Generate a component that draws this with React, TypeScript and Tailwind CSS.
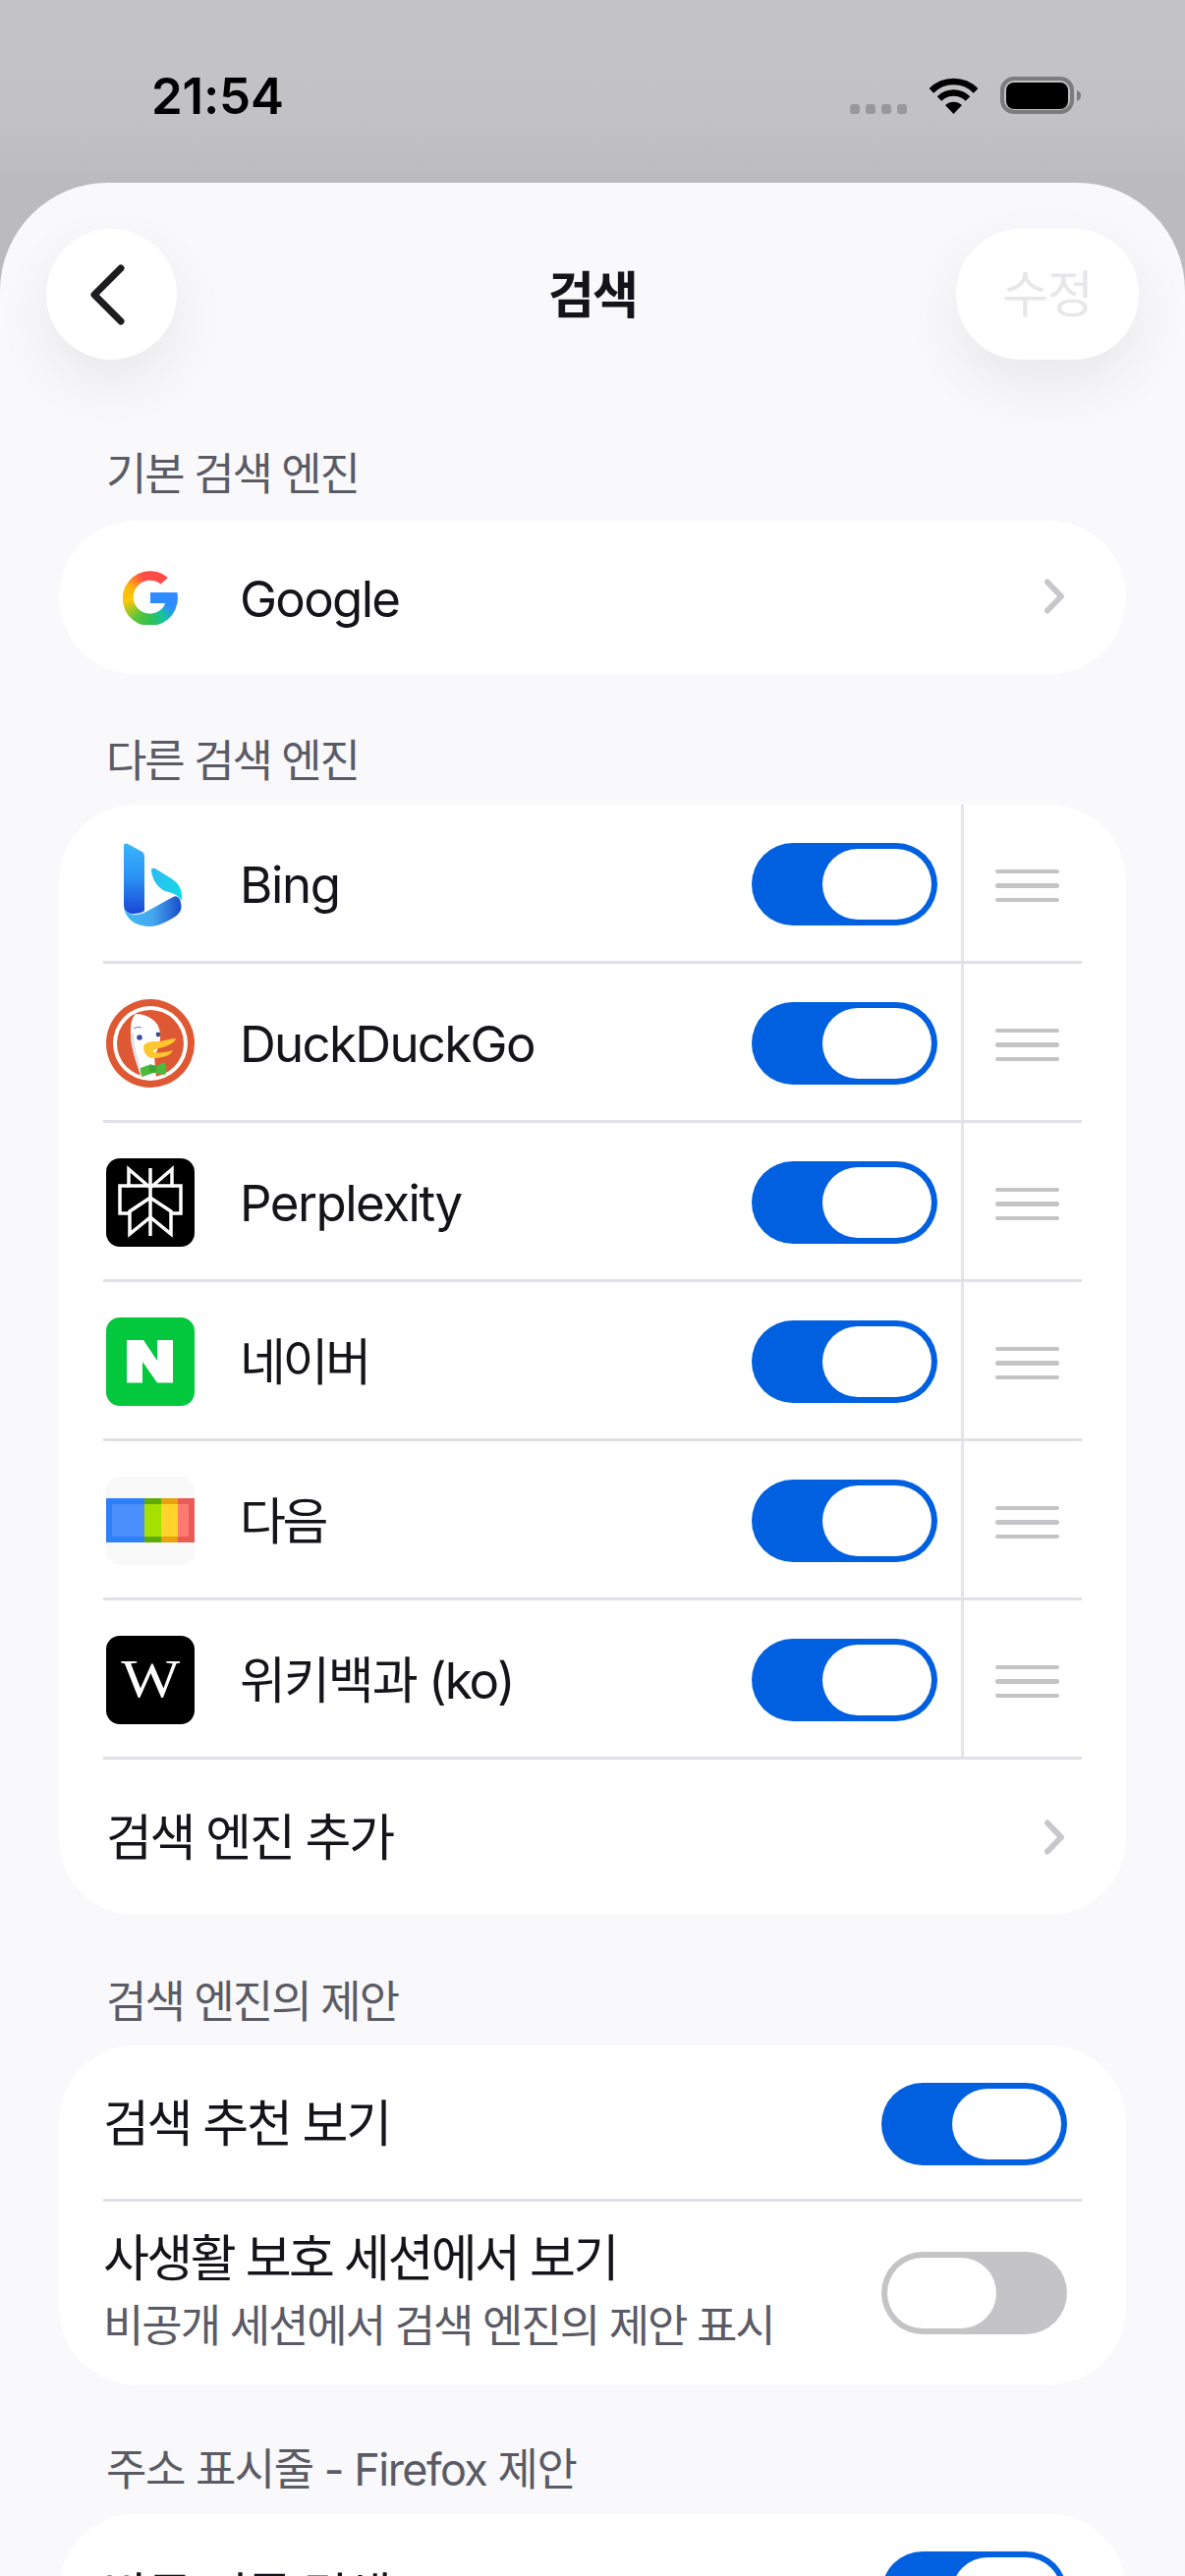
import React from "react";

function Toggle({ on = true }: { on?: boolean }) {
  return on ? (
    <div className="flex h-[84px] w-[189px] shrink-0 items-center justify-end rounded-full bg-[#0060df] pr-[6px]">
      <div className="h-[72px] w-[111px] rounded-full bg-white" />
    </div>
  ) : (
    <div className="flex h-[84px] w-[189px] shrink-0 items-center justify-start rounded-full bg-[#c4c4c6] pl-[6px]">
      <div className="h-[72px] w-[111px] rounded-full bg-white" />
    </div>
  );
}

function Chevron({ className = "" }: { className?: string }) {
  return (
    <svg width="24" height="42" viewBox="0 0 24 42" fill="none" className={`shrink-0 ${className}`}>
      <path d="M5 6.5 L19 21 L5 35.5" stroke="#c8c8cc" strokeWidth="6" strokeLinecap="round" strokeLinejoin="round" />
    </svg>
  );
}

function GoogleIcon() {
  return (
    <div className="flex h-[90px] w-[90px] items-center justify-center">
      <div className="relative h-[56px] w-[56px] overflow-hidden bg-[conic-gradient(from_0deg_at_50%_50%,#ff4b45_0deg,#ff4b45_40deg,#2e8cff_85deg,#2e8cff_115deg,#16c2a0_145deg,#2fc14f_180deg,#5cc63a_215deg,#fcc70a_262deg,#fbb80a_295deg,#ff4b45_340deg,#ff4b45_360deg)] [clip-path:path('M46_8A28_28_0_1_0_55.7_28Q55.7_25_55_23H28V34H43.5A17_17_0_1_1_38.5_14.5Z')]">
        <div className="absolute left-[28px] top-[23px] h-[13px] w-[28px] bg-[#2e8cff]" />
      </div>
    </div>
  );
}

function BingIcon() {
  return (
    <svg width="90" height="90" viewBox="0 0 90 90">
      <defs>
        <linearGradient id="bingStem" x1="0" y1="0" x2="0" y2="1">
          <stop offset="0" stopColor="#37b6fb" />
          <stop offset="0.5" stopColor="#2a90f4" />
          <stop offset="1" stopColor="#1a45d6" />
        </linearGradient>
        <linearGradient id="bingRibbon" x1="0" y1="0" x2="1" y2="0">
          <stop offset="0" stopColor="#3cb9f6" />
          <stop offset="0.5" stopColor="#45a8ee" />
          <stop offset="1" stopColor="#1a4ccb" />
        </linearGradient>
        <linearGradient id="bingLobe" x1="0" y1="0" x2="1" y2="0.4">
          <stop offset="0" stopColor="#30b8f4" />
          <stop offset="1" stopColor="#16d6e6" />
        </linearGradient>
      </defs>
      <path d="M18 68 C20 82 32 88 45 88 C52 88 60 84 67 80 C74 76 78 72 76 64 C75 58 72 56 68 58 L39 74 C30 78 20 76 18 68 Z" fill="url(#bingRibbon)" />
      <path d="M18 6 C18 3 20 3 22 4 L35 11 C38 13 39 14 39 17 L39 72 C34 76 18 78 18 66 Z" fill="url(#bingStem)" />
      <path d="M46 32 C45 29 48 28 50 29 L66 39 C74 44 78 50 77 62 C74 56 68 54 60 52 C52 48 48 42 46 32 Z" fill="url(#bingLobe)" />
    </svg>
  );
}

function DuckIcon() {
  return (
    <svg width="90" height="90" viewBox="0 0 90 90">
      <circle cx="45" cy="45" r="45" fill="#de5833" />
      <circle cx="45" cy="45" r="38" fill="#ffffff" />
      <circle cx="45" cy="45" r="34" fill="#de5833" />
      <path d="M30 15 C25 20 25 28 25 36 C25 50 32 68 36 80 C40 80 46 80 51 79 L49 58 C56 46 58 32 50 23 C45 18 38 15 30 15 Z" fill="#ffffff" />
      <path d="M25 36 C25 50 32 68 36 80 L38 80 C34 66 28 50 28 34 Z" fill="#dfe1e2" />
      <circle cx="34" cy="39" r="2.8" fill="#3a4b9f" />
      <circle cx="53" cy="36" r="2.4" fill="#3a4b9f" />
      <path d="M28 30 Q32 27 36 29" stroke="#6b7bbb" strokeWidth="1" fill="none" />
      <path d="M38 49 C38 43 48 43 55 43 C60 42 66 40 71 40 C70 44 66 46 58 49 C52 50 47 52 48 54 C54 55 62 54 68 52 C66 58 56 60 48 60 C42 60 38 55 38 49 Z" fill="#fdc52f" />
      <path d="M35 70 L46 66 L48 70 L59 64 C62 70 62 74 60 77 L48 75 L37 79 C35 76 35 73 35 70 Z" fill="#4cba3c" />
      <circle cx="47.5" cy="71" r="4" fill="#3fa830" />
    </svg>
  );
}

function PerplexityIcon() {
  return (
    <div className="h-[90px] w-[90px] rounded-[14px] bg-black">
      <svg width="90" height="90" viewBox="0 0 90 90" fill="none" stroke="#fff" strokeWidth="3.5" strokeLinejoin="miter">
        <path d="M45 10 V79" />
        <path d="M23 11 L45 30 L67 11 V28 H23 Z" />
        <path d="M23 28 H14 V56 H24 M67 28 H76 V56 H66" />
        <path d="M45 40 L24 54 V77 L45 60 L66 77 V54 Z" />
      </svg>
    </div>
  );
}

function NaverIcon() {
  return (
    <div className="h-[90px] w-[90px] rounded-[14px] bg-[#03c73c]">
      <svg width="90" height="90" viewBox="0 0 90 90">
        <path d="M21 23 H38 L52 44 V23 H68 V66.5 H52 L37 45 V66.5 H21 Z" fill="#fff" />
      </svg>
    </div>
  );
}

function DaumIcon() {
  return (
    <div className="h-[90px] w-[90px] overflow-hidden rounded-[14px] bg-[#f9f9f9]">
      <svg width="90" height="90" viewBox="0 0 90 90">
        <rect x="0" y="22" width="39" height="45" fill="#2d7ffb" />
        <rect x="39" y="22" width="17" height="45" fill="#5eab07" />
        <rect x="56" y="22" width="17" height="45" fill="#e8a10f" />
        <rect x="73" y="22" width="17" height="45" fill="#e85c55" />
        <rect x="6" y="28" width="33" height="33" fill="#4b8ffd" />
        <rect x="39" y="28" width="17" height="33" fill="#a6e000" />
        <rect x="56" y="28" width="17" height="33" fill="#ffd42a" />
        <rect x="73" y="28" width="11" height="33" fill="#ff7b72" />
      </svg>
    </div>
  );
}

function WikiIcon() {
  return (
    <div className="flex h-[90px] w-[90px] items-center justify-center rounded-[14px] bg-black font-['Liberation_Serif',serif] text-[60px] leading-none text-white">
      <span className="-mt-[2px] scale-x-[1.06] scale-y-[0.92]">W</span>
    </div>
  );
}

function EngineRow({ icon, name, tk }: { icon: React.ReactNode; name: string; tk: string }) {
  return (
    <div className="flex h-[162px] items-stretch border-b-[3px] border-[#e0e0e6]">
      <div className="flex flex-1 items-center pl-[3px] pr-[24px] pt-[3px]">
        <div className="h-[90px] w-[90px] shrink-0">{icon}</div>
        <span className={`ml-[46px] flex-1 text-[51px] leading-none text-[#15141a] ${tk}`}>{name}</span>
        <Toggle />
      </div>
      <div className="flex w-[123px] shrink-0 flex-col items-end justify-center gap-[10px] border-l-[3px] border-[#e5e5e9] pr-[23px] pt-[6px]">
        <div className="h-[4.5px] w-[65px] rounded-full bg-[#c4c4c6]" />
        <div className="h-[4.5px] w-[65px] rounded-full bg-[#c4c4c6]" />
        <div className="h-[4.5px] w-[65px] rounded-full bg-[#c4c4c6]" />
      </div>
    </div>
  );
}

function Heading({ children, tk, last }: { children: React.ReactNode; tk: string; last?: boolean }) {
  return (
    <div className={`mt-[57px] h-[60px] pl-[108px] text-[45px] leading-[60px] text-[#5b5b66] ${tk} ${last ? "mb-[15px]" : "mb-[16px] pt-[2px]"}`}>
      {children}
    </div>
  );
}

export default function App() {
  const engines = [
    { icon: <BingIcon />, name: "Bing", tk: "tracking-[-1.4px]" },
    { icon: <DuckIcon />, name: "DuckDuckGo", tk: "tracking-[-1.7px]" },
    { icon: <PerplexityIcon />, name: "Perplexity", tk: "tracking-[-1.5px]" },
    { icon: <NaverIcon />, name: "네이버", tk: "tracking-[-3.3px]" },
    { icon: <DaumIcon />, name: "다음", tk: "tracking-[-3.3px]" },
    { icon: <WikiIcon />, name: "위키백과 (ko)", tk: "tracking-[-2px]" },
  ];
  return (
    <div className="h-[2622px] w-[1206px] overflow-hidden bg-[linear-gradient(180deg,#c4c4c6_0%,#c2c2c4_120px,#bbbbbd_186px,#bbbbbd_320px)] font-['Inter','Noto_Sans_CJK_KR',sans-serif]">
      {/* status bar */}
      <div className="flex h-[186px] items-start justify-between pl-[154px] pr-[106px] pt-[68px]">
        <span className="text-[51px] font-semibold leading-[60px] tracking-[-0.2px] text-black">21:54</span>
        <div className="flex items-start pt-[10px]">
          <div className="mr-[22px] mt-[28px] flex gap-[6px]">
            <div className="h-[10px] w-[10px] rounded-[3px] bg-[#999999]" />
            <div className="h-[10px] w-[10px] rounded-[3px] bg-[#999999]" />
            <div className="h-[10px] w-[10px] rounded-[3px] bg-[#999999]" />
            <div className="h-[10px] w-[10px] rounded-[3px] bg-[#999999]" />
          </div>
          <svg width="51" height="37" viewBox="0 0 51 37" fill="none" className="mt-[1px]">
            <path d="M2.9 13.4 A32 32 0 0 1 48.1 13.4" stroke="#000" strokeWidth="6.5" />
            <path d="M11 21.5 A20.5 20.5 0 0 1 40 21.5" stroke="#000" strokeWidth="6.5" />
            <path d="M25.5 37 L17 28 A12.5 12.5 0 0 1 34 28 Z" fill="#000" />
          </svg>
          <svg width="82" height="38" viewBox="0 0 82 38" className="ml-[22px]">
            <rect x="2" y="2" width="71" height="34" rx="12" fill="none" stroke="#7c7c7e" strokeWidth="4" />
            <rect x="6" y="6" width="63" height="27" rx="8" fill="#000" />
            <path d="M78 14 C81 15 82 17 82 19 C82 21 81 24 78 25 Z" fill="#7c7c7e" />
          </svg>
        </div>
      </div>

      {/* sheet */}
      <div className="h-[2436px] rounded-t-[110px] bg-[#f9f9fb]">
        <div className="grid grid-cols-[1fr_auto_1fr] items-center px-[47px] pt-[47px]">
          <div className="flex h-[133px] w-[133px] items-center justify-center justify-self-start rounded-full bg-white pr-[10px] shadow-[0_24px_60px_rgba(0,0,0,0.07)]">
            <svg width="40" height="62" viewBox="0 0 40 62" fill="none">
              <path d="M34 4 L7 31 L34 58" stroke="#1d1d20" strokeWidth="7" strokeLinecap="round" strokeLinejoin="round" />
            </svg>
          </div>
          <span className="pt-[2px] text-[51px] font-semibold leading-none tracking-[-2px] text-[#15141a]">검색</span>
          <div className="flex h-[133px] w-[186px] items-center justify-center justify-self-end rounded-[66px] bg-white text-[51px] leading-none tracking-[-1px] text-[#e7e7ea] shadow-[0_24px_60px_rgba(0,0,0,0.07)]">
            수정
          </div>
        </div>

        <div className="mb-[20px] mt-[84px] h-[60px] pl-[108px] pt-[3px] text-[45px] leading-[60px] tracking-[-2.1px] text-[#5b5b66]">기본 검색 엔진</div>
        <div className="mx-[60px] flex h-[156px] items-center rounded-[78px] bg-white pl-[48px] pr-[61px]">
          <GoogleIcon />
          <span className="ml-[46px] flex-1 pt-[2px] text-[51px] leading-none tracking-[-1.7px] text-[#15141a]">Google</span>
          <Chevron className="mb-[3px]" />
        </div>

        <Heading tk="tracking-[-2.1px]">다른 검색 엔진</Heading>
        <div className="mx-[60px] rounded-[78px] bg-white">
          <div className="mx-[45px]">
            {engines.map((e) => (
              <EngineRow key={e.name} icon={e.icon} name={e.name} tk={e.tk} />
            ))}
            <div className="flex h-[158px] items-center pl-[3px] pr-[16px]">
              <span className="flex-1 text-[51px] leading-none tracking-[-2.3px] text-[#15141a]">검색 엔진 추가</span>
              <Chevron />
            </div>
          </div>
        </div>

        <Heading tk="tracking-[-2px]">검색 엔진의 제안</Heading>
        <div className="mx-[60px] rounded-[78px] bg-white">
          <div className="mx-[45px]">
            <div className="flex h-[159px] items-center justify-between border-b-[3px] border-[#e0e0e6] pr-[15px] pt-[3px]">
              <span className="text-[51px] leading-none tracking-[-2.3px] text-[#15141a]">검색 추천 보기</span>
              <Toggle />
            </div>
            <div className="flex h-[186px] items-center justify-between pr-[15px]">
              <div className="flex flex-col gap-[13px] pb-[6px]">
                <span className="text-[51px] leading-[60px] tracking-[-2.6px] text-[#15141a]">사생활 보호 세션에서 보기</span>
                <span className="text-[45px] leading-[52px] tracking-[-2.05px] text-[#5b5b66]">비공개 세션에서 검색 엔진의 제안 표시</span>
              </div>
              <Toggle on={false} />
            </div>
          </div>
        </div>

        <Heading tk="tracking-[-1.5px]" last>주소 표시줄 - Firefox 제안</Heading>
        <div className="mx-[60px] rounded-[78px] bg-white">
          <div className="mx-[45px]">
            <div className="flex h-[156px] items-center justify-between pr-[15px] pt-[3px]">
              <span className="pt-[8px] text-[51px] leading-none tracking-[-2.3px] text-[#15141a]">방문 기록 검색</span>
              <Toggle />
            </div>
          </div>
        </div>
      </div>
    </div>
  );
}
